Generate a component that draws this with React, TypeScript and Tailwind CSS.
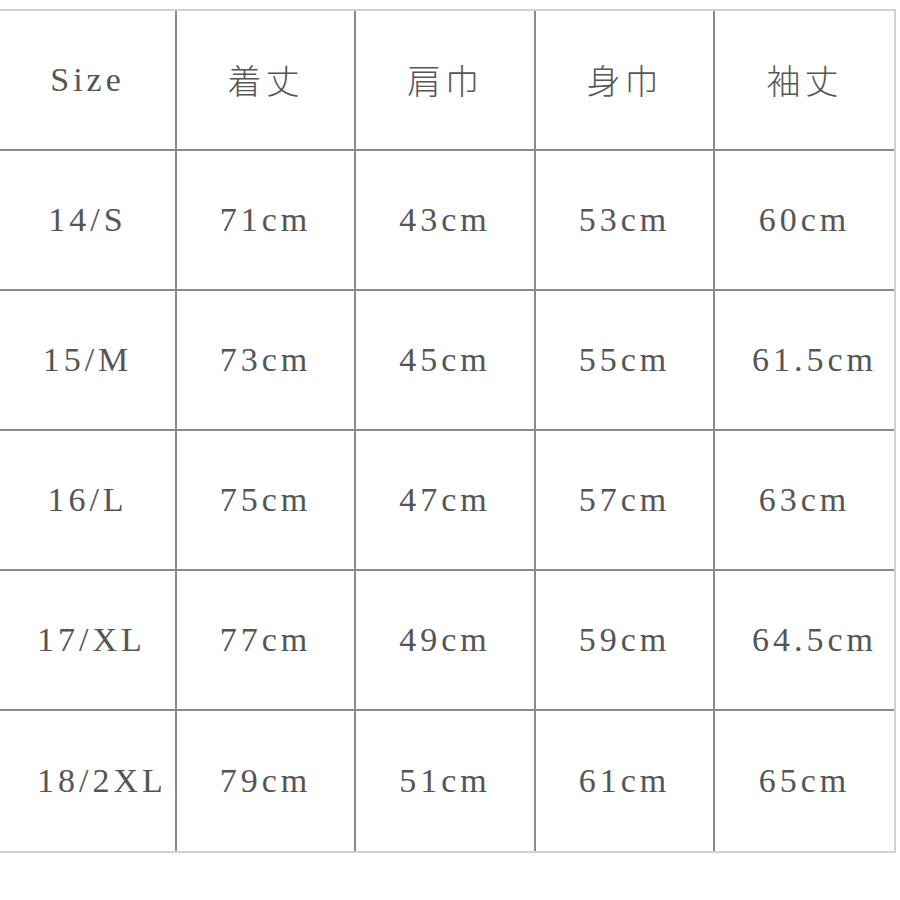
const headers = ["Size", "着丈", "肩巾", "身巾", "袖丈"];

const rows = [
  ["14/S", "71cm", "43cm", "53cm", "60cm"],
  ["15/M", "73cm", "45cm", "55cm", "61.5cm"],
  ["16/L", "75cm", "47cm", "57cm", "63cm"],
  ["17/XL", "77cm", "49cm", "59cm", "64.5cm"],
  ["18/2XL", "79cm", "51cm", "61cm", "65cm"],
];

const isCjk = (s: string) => /[\u3000-\u9fff]/.test(s);

function Row({ cells, last }: { cells: string[]; last?: boolean }) {
  return (
    <div
      className={`grid h-[140px] grid-cols-[175px_179px_180px_179px_181px] ${
        last ? "" : "border-b-2 border-[#8a8a8a]"
      }`}
    >
      {cells.map((c, i) => (
        <div
          key={i}
          className={`flex items-center px-[37px] ${
            i > 0 ? "border-l-2 border-[#8a8a8a]" : ""
          }`}
        >
          <div
            className="w-full whitespace-nowrap text-center text-[34px] leading-none tracking-[4px] text-[#555]"
            style={{
              fontFamily: isCjk(c)
                ? '"Noto Sans CJK JP", sans-serif'
                : '"Liberation Serif", "Noto Sans CJK JP", serif',
              fontWeight: isCjk(c) ? 300 : 400,
            }}
          >
            {c}
          </div>
        </div>
      ))}
    </div>
  );
}

export default function App() {
  return (
    <div className="h-[900px] w-[900px] bg-white pt-[9px]">
      <div className="w-[896px] border-t-2 border-r-2 border-b-2 border-[#d0d0d0]">
        <Row cells={headers} />
        {rows.map((r, i) => (
          <Row key={i} cells={r} last={i === rows.length - 1} />
        ))}
      </div>
    </div>
  );
}
